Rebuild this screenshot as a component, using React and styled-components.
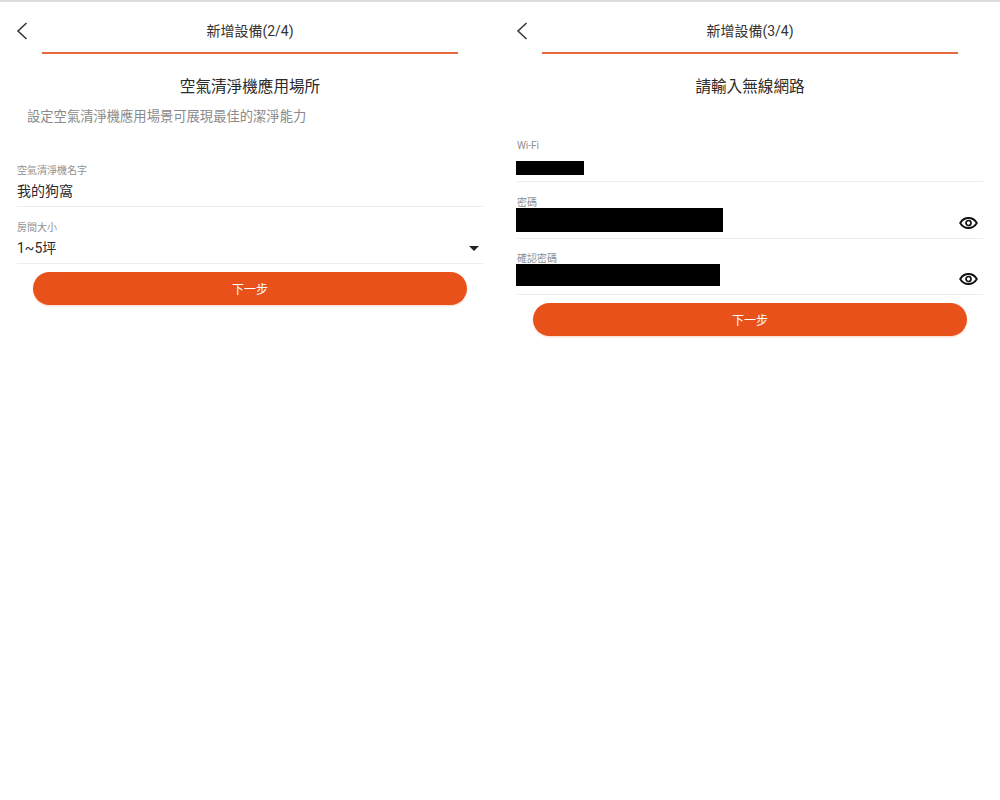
import React from 'react';
import styled, { createGlobalStyle } from 'styled-components';

const GlobalStyle = createGlobalStyle`
html, body {
    margin: 0;
    padding: 0;
    background: #fff;
}
body {
    font-family: Roboto, "Noto Sans CJK TC", sans-serif;
}
`;

const Page = styled.div`
width: 1000px;
height: 800px;
display: flex;
border-top: 2px solid #dcdcdc;
box-sizing: border-box;
overflow: hidden;
`;

const Panel = styled.div`
width: 500px;
display: flex;
flex-direction: column;
`;

const Header = styled.div`
position: relative;
height: 44px;
padding-top: 6px;
margin: 0 42px;
border-bottom: 2px solid #e46a3c;
display: flex;
align-items: center;
justify-content: center;
font-size: 14px;
color: #333;
`;

const BackIcon = styled.svg`
position: absolute;
left: -26px;
top: 20px;
width: 12px;
height: 18px;
`;

const Heading = styled.div`
margin-top: 21px;
height: 24px;
line-height: 24px;
text-align: center;
font-size: 15.6px;
color: #2a2a2a;
`;

const Subtitle = styled.div`
margin: 8px 0 0 27px;
height: 20px;
line-height: 20px;
font-size: 13.3px;
color: #8a8a8a;
`;

const Form = styled.div`
margin: ${props => props.$top}px 17px 0;
display: flex;
flex-direction: column;
`;

const Field = styled.div`
padding: ${props => (props.$short ? 14 : 15)}px 0 5px;
border-bottom: 1px solid #ececec;
`;

const Label = styled.div`
height: 12px;
line-height: 12px;
font-size: 10px;
color: #8f8f8f;
`;

const ValueRow = styled.div`
position: relative;
margin-top: 4px;
height: 20px;
line-height: 20px;
font-size: 14px;
color: #2a2a2a;
display: flex;
align-items: center;
justify-content: space-between;
`;

// black box hiding the wifi name and the passwords
const Redaction = styled.div`
position: absolute;
left: -1px;
top: ${props => props.$top}px;
width: ${props => props.$width}px;
height: ${props => props.$height}px;
background: #000;
`;

const Caret = styled.div`
margin-right: 4px;
width: 0;
height: 0;
border-left: 5px solid transparent;
border-right: 5px solid transparent;
border-top: 5px solid #222;
`;

const EyeIcon = styled.svg`
position: absolute;
right: 5px;
top: 3px;
width: 19px;
height: 14px;
`;

const NextButton = styled.div`
margin: 8px 33px 0;
height: 33px;
border-radius: 17px;
background: #e8521a;
box-shadow: 0 1px 2px rgba(232, 82, 26, 0.25);
color: #fff;
font-size: 12px;
display: flex;
align-items: center;
justify-content: center;
`;

function TopBar({ title }) {
    return (
        <Header>
            <BackIcon viewBox="0 0 12 18">
                <polyline points="10.5,1 2,9 10.5,17" fill="none" stroke="#333" strokeWidth="1.5" />
            </BackIcon>
            {title}
        </Header>
    );
}

function Eye() {
    return (
        <EyeIcon viewBox="0 0 19 14">
            <path d="M1.2 7C3.2 3.6 6 2 9.5 2s6.3 1.6 8.3 5c-2 3.4-4.8 5-8.3 5S3.200 10.400 1.200 7Z" fill="none" stroke="#111" strokeWidth="1.9" />
            <circle cx="9.5" cy="7" r="2.5" fill="none" stroke="#111" strokeWidth="1.700" />
        </EyeIcon>
    );
}

function SecretField({ label, width, height, top, showEye, short }) {
    return (
        <Field $short={short}>
            <Label>{label}</Label>
            <ValueRow>
                <Redaction $width={width} $height={height} $top={top} />
                {showEye && <Eye />}
            </ValueRow>
        </Field>
    );
}

export default function App() {
    return (
        <Page>
            <GlobalStyle />
            <Panel>
                <TopBar title="新增設備(2/4)" />
                <Heading>空氣清淨機應用場所</Heading>
                <Subtitle>設定空氣清淨機應用場景可展現最佳的潔淨能力</Subtitle>
                <Form $top={23}>
                    <Field>
                        <Label>空氣清淨機名字</Label>
                        <ValueRow>我的狗窩</ValueRow>
                    </Field>
                    <Field>
                        <Label>房間大小</Label>
                        <ValueRow>
                            1~5坪
                            <Caret />
                        </ValueRow>
                    </Field>
                </Form>
                <NextButton>下一步</NextButton>
            </Panel>
            <Panel>
                <TopBar title="新增設備(3/4)" />
                <Heading>請輸入無線網路</Heading>
                <Form $top={26}>
                    <SecretField label="Wi-Fi" width={68} height={14} top={5} />
                    <SecretField label="密碼" width={207} height={24} top={-5} showEye />
                    <SecretField label="確認密碼" width={204} height={22} top={-5} showEye short />
                </Form>
                <NextButton>下一步</NextButton>
            </Panel>
        </Page>
    );
}
